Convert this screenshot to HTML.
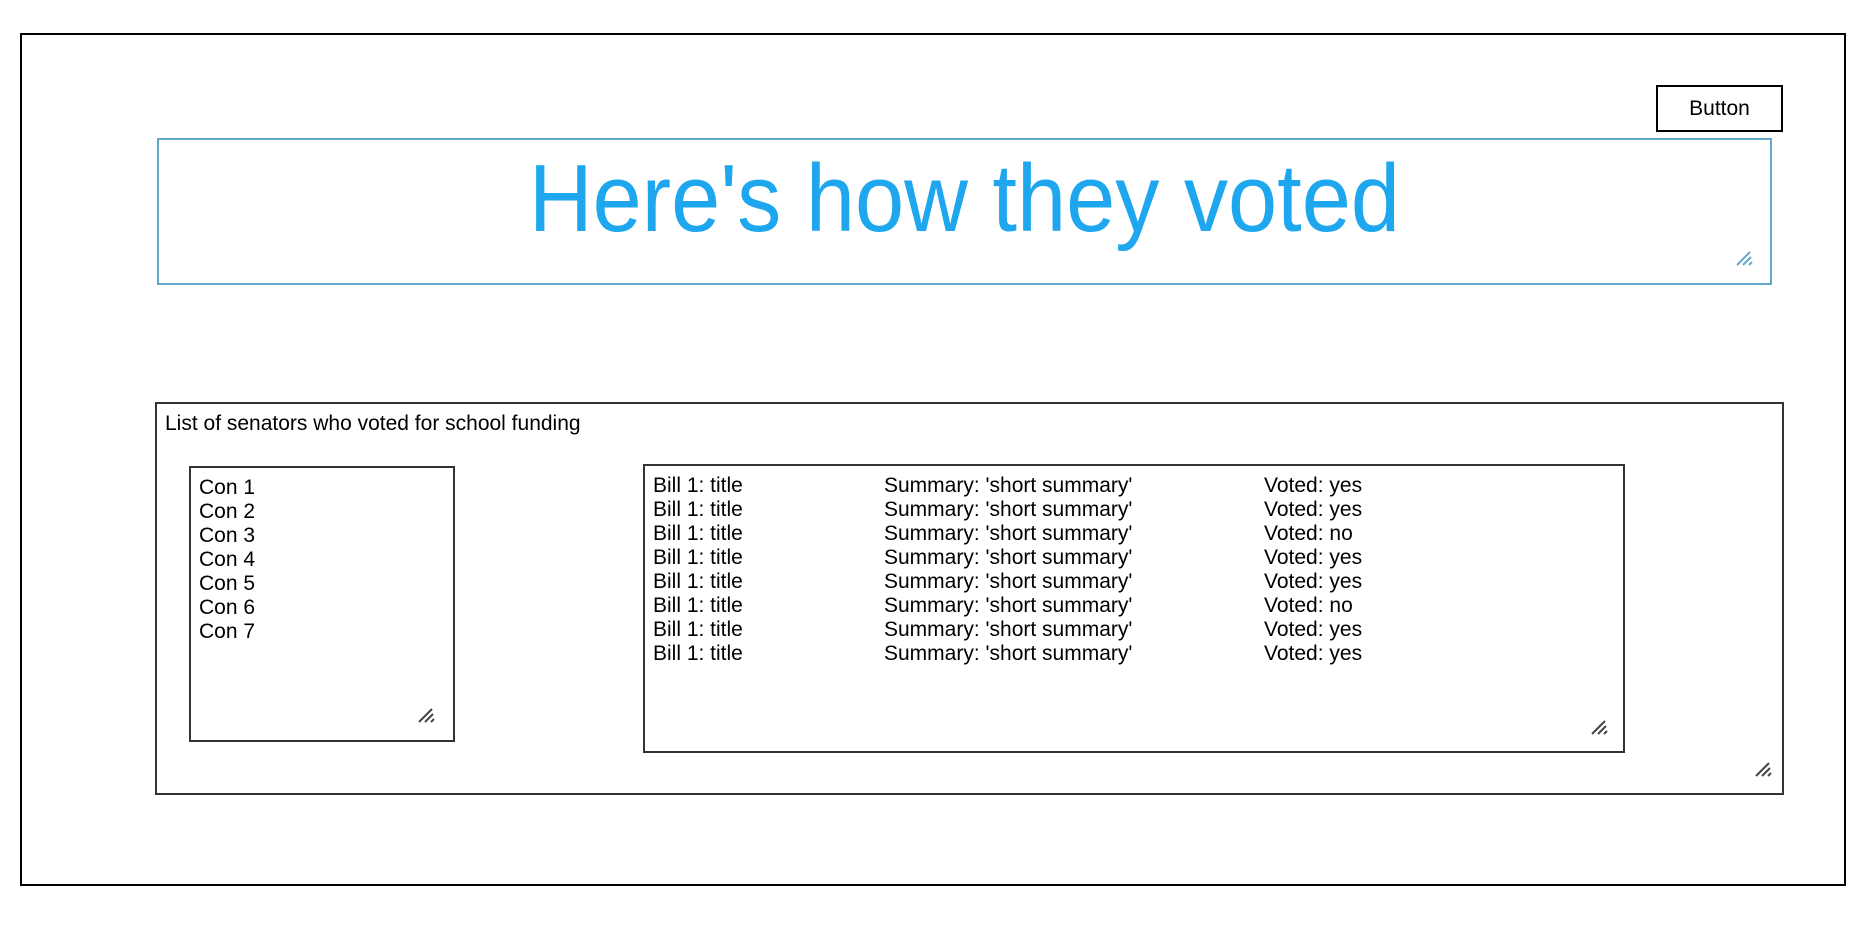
<!DOCTYPE html>
<html><head><meta charset="utf-8"><style>
body{margin:0;width:1874px;height:952px;background:#fff;position:relative;font-family:"Liberation Sans",sans-serif;color:#000;overflow:hidden}
.a{position:absolute;box-sizing:border-box}
.grip{position:absolute;width:18px;height:18px}
.t{position:absolute;font-size:21px;line-height:24px;white-space:nowrap}
</style></head><body>
<div class="a" style="left:20px;top:33px;width:1826px;height:853px;border:2px solid #000"></div>
<div class="a" style="left:1656px;top:85px;width:127px;height:47px;border:2px solid #000;font-size:21px;line-height:43px;text-align:center">Button</div>
<div class="a" style="left:157px;top:138px;width:1615px;height:147px;border:2px solid #62a9c9"></div>
<div class="a" style="left:157px;top:144px;width:1615px;text-align:center;font-size:96px;line-height:110px;color:#1ea7ee"><span style="display:inline-block;transform:scaleX(0.92)">Here's how they voted</span></div>
<svg class="grip" style="left:1735px;top:248px" viewBox="0 0 18 18"><path d="M2 17L15 4M8 17L16 9M14 17L17 14" stroke="#62a9c9" stroke-width="2"/></svg>
<div class="a" style="left:155px;top:402px;width:1629px;height:393px;border:2px solid #333"></div>
<div class="t" style="left:165px;top:412px">List of senators who voted for school funding</div>
<div class="a" style="left:189px;top:466px;width:266px;height:276px;border:2px solid #333"></div>
<div class="t" style="left:199px;top:476px">Con 1<br>Con 2<br>Con 3<br>Con 4<br>Con 5<br>Con 6<br>Con 7</div>
<svg class="grip" style="left:417px;top:705px" viewBox="0 0 18 18"><path d="M2 17L15 4M8 17L16 9M14 17L17 14" stroke="#444" stroke-width="2"/></svg>
<div class="a" style="left:643px;top:464px;width:982px;height:289px;border:2px solid #333"></div>
<div class="t" style="left:653px;top:474px">Bill 1: title<br>Bill 1: title<br>Bill 1: title<br>Bill 1: title<br>Bill 1: title<br>Bill 1: title<br>Bill 1: title<br>Bill 1: title</div>
<div class="t" style="left:884px;top:474px">Summary: 'short summary'<br>Summary: 'short summary'<br>Summary: 'short summary'<br>Summary: 'short summary'<br>Summary: 'short summary'<br>Summary: 'short summary'<br>Summary: 'short summary'<br>Summary: 'short summary'</div>
<div class="t" style="left:1264px;top:474px">Voted: yes<br>Voted: yes<br>Voted: no<br>Voted: yes<br>Voted: yes<br>Voted: no<br>Voted: yes<br>Voted: yes</div>
<svg class="grip" style="left:1590px;top:717px" viewBox="0 0 18 18"><path d="M2 17L15 4M8 17L16 9M14 17L17 14" stroke="#444" stroke-width="2"/></svg>
<svg class="grip" style="left:1754px;top:759px" viewBox="0 0 18 18"><path d="M2 17L15 4M8 17L16 9M14 17L17 14" stroke="#444" stroke-width="2"/></svg>
</body></html>
